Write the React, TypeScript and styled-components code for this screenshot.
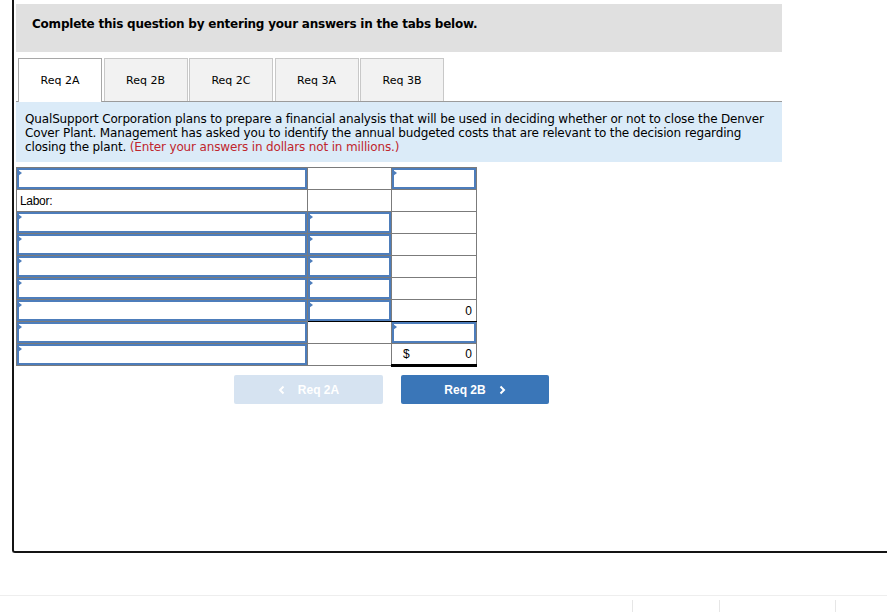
import React from "react";
import styled, { createGlobalStyle } from "styled-components";

const Global = createGlobalStyle`
  html, body { margin: 0; padding: 0; background: #fff; }
  body { font-family: "DejaVu Sans", Verdana, sans-serif; color: #000; }
  * { box-sizing: border-box; }
`;

const Page = styled.div`
  width: 887px;
  height: 612px;
  overflow: hidden;
  display: flex;
  flex-direction: column;
`;

const Frame = styled.div`
  margin-left: 12px;
  width: 900px;
  height: 553px;
  border-left: 2px solid #141414;
  border-bottom: 2px solid #141414;
  border-bottom-left-radius: 3px;
  padding: 4px 0 0 2px;
  display: flex;
  flex-direction: column;
  align-items: flex-start;
`;

const Header = styled.div`
  width: 766px;
  height: 48px;
  background: #e0e0e0;
  padding: 13px 0 0 16px;
  font-weight: bold;
  font-size: 12px;
  letter-spacing: -0.22px;
  white-space: nowrap;
`;

const Tabs = styled.div`
  margin-top: 6px;
  width: 766px;
  display: flex;
  gap: 1.5px;
  padding-left: 2px;
  border-bottom: 1px solid #9b9b9b;
`;

const Tab = styled.div<{ $active?: boolean }>`
  width: 84px;
  display: flex;
  align-items: center;
  justify-content: center;
  font-size: 11px;
  background: ${(p) => (p.$active ? "#fff" : "#f2f2f2")};
  border: 1px solid ${(p) => (p.$active ? "#a8a8a8" : "#c8c8c8")};
  border-bottom: none;
  margin-bottom: ${(p) => (p.$active ? "-1px" : "0")};
  height: ${(p) => (p.$active ? "44px" : "43px")};
  padding-bottom: ${(p) => (p.$active ? "1px" : "0")};
`;

const Prompt = styled.div`
  width: 766px;
  height: 60px;
  background: #dbebf8;
  padding: 10px 0 0 9px;
  font-size: 12px;
  letter-spacing: -0.15px;
  line-height: 14px;
  white-space: nowrap;
`;

const Red = styled.span`
  color: #c0262d;
`;

const Table = styled.table`
  margin-top: 5px;
  border-collapse: collapse;
  table-layout: fixed;
  width: 461px;
  font-family: "Liberation Sans", Arial, sans-serif;
  font-size: 12px;
`;

const Cell = styled.td<{ $bottom?: string }>`
  height: 22px;
  border: 1px solid #7b7b7b;
  ${(p) => (p.$bottom ? `border-bottom: ${p.$bottom};` : "")}
  padding: 0;
  position: relative;
`;

const Input = styled.div`
  position: absolute;
  inset: 0;
  border: 2px solid #4d7dbb;
  &::before {
    content: "";
    position: absolute;
    left: -1px;
    top: 0;
    border-left: 4px solid #4d7dbb;
    border-top: 3px solid transparent;
    border-bottom: 3px solid transparent;
  }
`;

const Label = styled.div`
  padding-left: 3px;
  font-size: 12px;
  letter-spacing: -0.3px;
`;

const Amount = styled.div`
  display: flex;
  justify-content: space-between;
  padding: 0 4px 0 11px;
`;

const Buttons = styled.div`
  margin-top: 8px;
  margin-left: 218px;
  display: flex;
  gap: 18px;
`;

const NavButton = styled.div<{ $disabled?: boolean }>`
  width: ${(p) => (p.$disabled ? 149 : 148)}px;
  height: 29px;
  border-radius: 2px;
  background: ${(p) => (p.$disabled ? "#d6e3f1" : "#3a76b8")};
  color: #fff;
  display: flex;
  align-items: center;
  justify-content: center;
  gap: 13px;
  font-family: "Liberation Sans", Arial, sans-serif;
  font-weight: bold;
  font-size: 12px;
`;

const Footer = styled.div`
  margin-top: 42px;
  height: 17px;
  border-top: 1px solid #eeeeee;
  display: flex;
  padding-top: 4px;
`;

const FootCell = styled.div<{ $w: number }>`
  width: ${(p) => p.$w}px;
  border-right: 1px solid #e6e6e6;
`;

const Chevron = ({ dir }: { dir: "l" | "r" }) => (
  <svg width="7" height="10" viewBox="0 0 7 10">
    <polyline
      points={dir === "r" ? "1.5,1.5 5,5 1.5,8.5" : "5.5,1.5 2,5 5.5,8.5"}
      fill="none"
      stroke="#fff"
      strokeWidth="2"
    />
  </svg>
);

type Kind = "in" | "plain" | "label" | "zero" | "total";
const rows: Kind[][] = [
  ["in", "plain", "in"],
  ["label", "plain", "plain"],
  ["in", "in", "plain"],
  ["in", "in", "plain"],
  ["in", "in", "plain"],
  ["in", "in", "plain"],
  ["in", "in", "zero"],
  ["in", "plain", "in"],
  ["in", "plain", "total"],
];
const widths = [291, 84, 85];

export default function App() {
  return (
    <Page>
      <Global />
      <Frame>
        <Header>Complete this question by entering your answers in the tabs below.</Header>
        <Tabs>
          <Tab $active>Req 2A</Tab>
          <Tab>Req 2B</Tab>
          <Tab>Req 2C</Tab>
          <Tab>Req 3A</Tab>
          <Tab>Req 3B</Tab>
        </Tabs>
        <Prompt>
          QualSupport Corporation plans to prepare a financial analysis that will be used in deciding whether or not to close the Denver
          <br />
          Cover Plant. Management has asked you to identify the annual budgeted costs that are relevant to the decision regarding
          <br />
          closing the plant. <Red>(Enter your answers in dollars not in millions.)</Red>
        </Prompt>
        <Table>
          <colgroup>
            {widths.map((w, i) => (
              <col key={i} style={{ width: w }} />
            ))}
          </colgroup>
          <tbody>
            {rows.map((r, i) => (
              <tr key={i}>
                {r.map((k, j) => (
                  <Cell
                    key={j}
                    $bottom={
                      i === 6 && j > 0
                        ? "1px solid #000"
                        : k === "total"
                        ? "3px solid #000"
                        : undefined
                    }
                  >
                    {k === "in" && <Input />}
                    {k === "label" && <Label>Labor:</Label>}
                    {k === "zero" && <Amount><span /><span>0</span></Amount>}
                    {k === "total" && <Amount><span>$</span><span>0</span></Amount>}
                  </Cell>
                ))}
              </tr>
            ))}
          </tbody>
        </Table>
        <Buttons>
          <NavButton $disabled>
            <Chevron dir="l" />
            <span>Req 2A</span>
          </NavButton>
          <NavButton>
            <span>Req 2B</span>
            <Chevron dir="r" />
          </NavButton>
        </Buttons>
      </Frame>
      <Footer>
        <FootCell $w={633} />
        <FootCell $w={87} />
        <FootCell $w={116} />
      </Footer>
    </Page>
  );
}
